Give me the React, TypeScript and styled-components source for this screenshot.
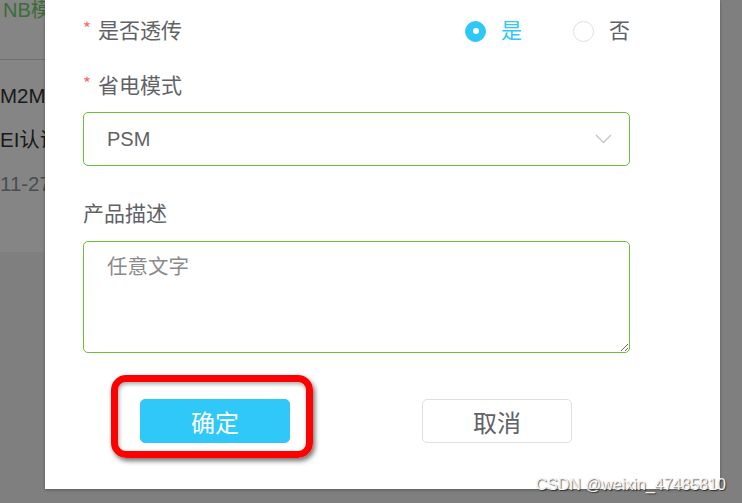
import React from 'react';
import styled, { createGlobalStyle } from 'styled-components';

const GlobalStyle = createGlobalStyle`
  html, body {
    margin: 0;
    padding: 0;
    width: 742px;
    height: 503px;
    overflow: hidden;
    background: #f4f4f4;
    font-family: "Liberation Sans", "Noto Sans CJK SC", sans-serif;
  }
`;

const Page = styled.div`
  position: relative;
  width: 742px;
  height: 503px;
  overflow: hidden;
`;

const Card = styled.div`
  width: 300px;
  background: #ffffff;
  padding-bottom: 46px;
`;

const CardHead = styled.div`
  height: 59px;
  border-bottom: 1px solid #d8d8d8;
  color: #73d16a;
  font-size: 20px;
  line-height: 20px;
  padding-left: 3px;
  white-space: nowrap;
`;

const CardBody = styled.div`
  padding-top: 14px;
`;

const CardRow = styled.div<{ $muted?: boolean }>`
  height: 44px;
  line-height: 44px;
  font-size: 20.5px;
  white-space: nowrap;
  color: ${(p) => (p.$muted ? '#909399' : '#333333')};
`;

const Mask = styled.div`
  position: absolute;
  inset: 0;
  background: rgba(0, 0, 0, 0.48);
`;

const Dialog = styled.div`
  position: absolute;
  left: 45px;
  top: 0;
  width: 675px;
  box-sizing: border-box;
  background: #ffffff;
  padding: 11px 90px 46px 38px;
  box-shadow: 0 1px 3px rgba(0, 0, 0, 0.3);
`;

const InlineItem = styled.div`
  display: flex;
  align-items: center;
  justify-content: space-between;
  height: 40px;
`;

const Label = styled.div<{ $gap?: number }>`
  display: flex;
  align-items: flex-start;
  height: 30px;
  line-height: 26px;
  margin-top: ${(p) => p.$gap ?? 0}px;
  font-family: "Noto Sans CJK SC", sans-serif;
  font-size: 21px;
  color: #606266;
`;

const Star = styled.span`
  color: #f56c6c;
  font-size: 17px;
  margin-right: 7px;
  position: relative;
  top: -1px;
`;

const RadioGroup = styled.div`
  display: flex;
  align-items: center;
  gap: 51px;
`;

const RadioItem = styled.label<{ $on?: boolean }>`
  display: flex;
  align-items: center;
  gap: 15px;
  font-family: "Noto Sans CJK SC", sans-serif;
  font-size: 21px;
  color: ${(p) => (p.$on ? '#2ec7f8' : '#606266')};
`;

const RadioText = styled.span`
  line-height: 26px;
  padding-bottom: 4px;
`;

const RadioDot = styled.span<{ $on?: boolean }>`
  box-sizing: border-box;
  width: 21px;
  height: 21px;
  border-radius: 50%;
  display: flex;
  align-items: center;
  justify-content: center;
  background: ${(p) => (p.$on ? '#2ec7f8' : '#ffffff')};
  border: 1px solid ${(p) => (p.$on ? '#2ec7f8' : '#dcdfe6')};

  &::after {
    content: '';
    width: 6px;
    height: 6px;
    border-radius: 50%;
    background: ${(p) => (p.$on ? '#ffffff' : 'transparent')};
  }
`;

const SelectBox = styled.div`
  box-sizing: border-box;
  margin-top: 11px;
  height: 54px;
  border: 1px solid #67c23a;
  border-radius: 5px;
  display: flex;
  align-items: center;
  justify-content: space-between;
  padding: 0 17px 0 23px;
  font-size: 20px;
  color: #606266;
`;

const TextArea = styled.textarea`
  display: block;
  box-sizing: border-box;
  width: 100%;
  height: 112px;
  margin-top: 12px;
  border: 1px solid #67c23a;
  border-radius: 5px;
  padding: 8px 23px;
  font-family: "Noto Sans CJK SC", sans-serif;
  font-size: 20.5px;
  line-height: 30px;
  color: #8a8a8a;
  resize: vertical;
  outline: none;
`;

const Actions = styled.div`
  display: flex;
  justify-content: space-between;
  margin-top: 46px;
  padding: 0 58px 0 57px;
`;

const Slot = styled.div`
  position: relative;
`;

const Button = styled.button<{ $primary?: boolean }>`
  box-sizing: border-box;
  width: 150px;
  height: 44px;
  border-radius: 5px;
  font-family: "Noto Sans CJK SC", sans-serif;
  font-size: 24px;
  cursor: pointer;
  background: ${(p) => (p.$primary ? '#30c8f8' : '#ffffff')};
  color: ${(p) => (p.$primary ? '#ffffff' : '#606266')};
  border: 1px solid ${(p) => (p.$primary ? '#30c8f8' : '#dcdfe6')};
`;

const Highlight = styled.div`
  position: absolute;
  left: -29px;
  top: -24px;
  width: 202px;
  height: 83px;
  box-sizing: border-box;
  border: 7px solid #ff0000;
  border-radius: 15px;
  box-shadow: 2px 3px 5px rgba(0, 0, 0, 0.55), inset 1px 2px 4px rgba(0, 0, 0, 0.35);
  pointer-events: none;
`;

const Watermark = styled.div`
  position: absolute;
  right: 16px;
  bottom: 9px;
  font-family: "Liberation Sans", sans-serif;
  font-size: 16px;
  color: #f4f4f4;
  text-shadow: 1px 1px 1px rgba(0, 0, 0, 0.6);
  white-space: nowrap;
`;

const Chevron = () => (
  <svg width="17" height="10" viewBox="0 0 17 10" fill="none">
    <polyline points="1,1 8.5,8.5 16,1" stroke="#c0c4cc" strokeWidth="1.3" />
  </svg>
);

const App = () => {
  return (
    <Page>
      <GlobalStyle />
      <Card>
        <CardHead>NB模组</CardHead>
        <CardBody>
          <CardRow>M2M</CardRow>
          <CardRow>EI认证</CardRow>
          <CardRow $muted>11-27</CardRow>
        </CardBody>
      </Card>
      <Mask />
      <Dialog>
        <InlineItem>
          <Label>
            <Star>*</Star>是否透传
          </Label>
          <RadioGroup>
            <RadioItem $on>
              <RadioDot $on />
              <RadioText>是</RadioText>
            </RadioItem>
            <RadioItem>
              <RadioDot />
              <RadioText>否</RadioText>
            </RadioItem>
          </RadioGroup>
        </InlineItem>
        <Label $gap={20}>
          <Star>*</Star>省电模式
        </Label>
        <SelectBox>
          <span>PSM</span>
          <Chevron />
        </SelectBox>
        <Label $gap={33}>产品描述</Label>
        <TextArea defaultValue="任意文字" />
        <Actions>
          <Slot>
            <Button $primary>确定</Button>
            <Highlight />
          </Slot>
          <Slot>
            <Button>取消</Button>
          </Slot>
        </Actions>
      </Dialog>
      <Watermark>CSDN @weixin_47485810</Watermark>
    </Page>
  );
};

export default App;
